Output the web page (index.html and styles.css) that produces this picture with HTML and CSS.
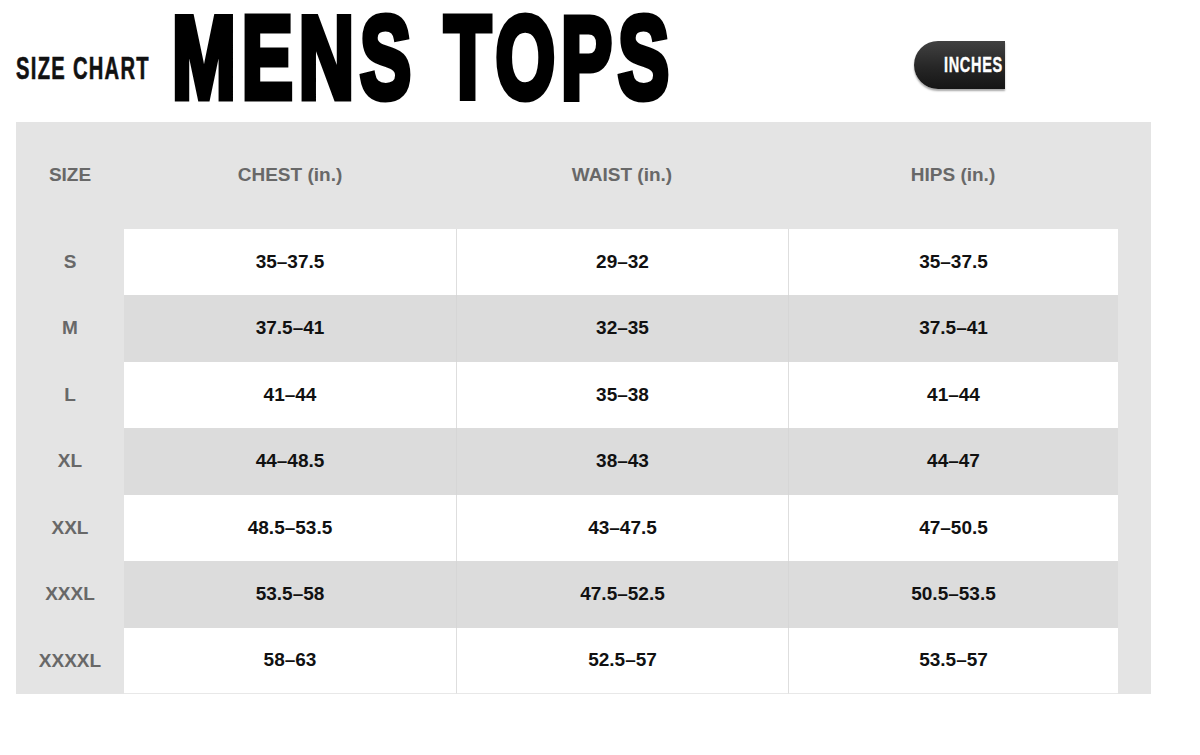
FILE: index.html
```html
<!DOCTYPE html>
<html lang="en">
<head>
<meta charset="utf-8">
<title>Size Chart - Mens Tops</title>
<link rel="stylesheet" href="styles.css">
</head>
<body>
<header class="top">
  <div class="size-chart"><span class="squeeze">SIZE CHART</span></div>
  <h1 class="mens-tops"><span class="squeeze">MENS TOPS</span></h1>
  <div class="unit-btn"><span class="squeeze">INCHES</span></div>
</header>
<section class="chart">
  <div class="row head">
    <div class="cell size">SIZE</div>
    <div class="cell">CHEST (in.)</div>
    <div class="cell">WAIST (in.)</div>
    <div class="cell">HIPS (in.)</div>
  </div>
  <div class="row light">
    <div class="cell size">S</div>
    <div class="cell data">35–37.5</div>
    <div class="cell data">29–32</div>
    <div class="cell data">35–37.5</div>
  </div>
  <div class="row dark">
    <div class="cell size">M</div>
    <div class="cell data">37.5–41</div>
    <div class="cell data">32–35</div>
    <div class="cell data">37.5–41</div>
  </div>
  <div class="row light">
    <div class="cell size">L</div>
    <div class="cell data">41–44</div>
    <div class="cell data">35–38</div>
    <div class="cell data">41–44</div>
  </div>
  <div class="row dark">
    <div class="cell size">XL</div>
    <div class="cell data">44–48.5</div>
    <div class="cell data">38–43</div>
    <div class="cell data">44–47</div>
  </div>
  <div class="row light">
    <div class="cell size">XXL</div>
    <div class="cell data">48.5–53.5</div>
    <div class="cell data">43–47.5</div>
    <div class="cell data">47–50.5</div>
  </div>
  <div class="row dark">
    <div class="cell size">XXXL</div>
    <div class="cell data">53.5–58</div>
    <div class="cell data">47.5–52.5</div>
    <div class="cell data">50.5–53.5</div>
  </div>
  <div class="row light">
    <div class="cell size">XXXXL</div>
    <div class="cell data">58–63</div>
    <div class="cell data">52.5–57</div>
    <div class="cell data">53.5–57</div>
  </div>
</section>
</body>
</html>
```

FILE: styles.css
```css
html, body {
  margin: 0;
  padding: 0;
  background: #ffffff;
}

body {
  font-family: "Liberation Sans", Arial, sans-serif;
  width: 1200px;
  height: 755px;
  overflow: hidden;
}

.top {
  display: flex;
  align-items: flex-start;
  height: 122px;
}

.squeeze {
  display: inline-block;
  white-space: nowrap;
  transform-origin: 0 50%;
}

.size-chart {
  margin: 53px -70px 0 16px;
  width: 210px;
  font-size: 31px;
  line-height: 31px;
  font-weight: 700;
  color: #111;
}
.size-chart .squeeze {
  letter-spacing: 2px;
  transform: scaleX(0.65);
  -webkit-text-stroke: 0.6px #111;
}

.mens-tops {
  margin: 8px -270px 0 16px;
  width: 770px;
  font-size: 116px;
  line-height: 100px;
  font-weight: 700;
  color: #000;
}
.mens-tops .squeeze {
  letter-spacing: 9px;
  transform: scaleX(0.66);
  -webkit-text-stroke: 7px #000;
}

.unit-btn {
  margin: 41px 0 0 242px;
  width: 91px;
  height: 48px;
  box-sizing: border-box;
  padding-left: 30px;
  display: flex;
  align-items: center;
  border-radius: 24px 0 0 24px;
  background: linear-gradient(#414141, #262626 55%, #151515);
  box-shadow: 0 2px 2px rgba(0, 0, 0, 0.35);
  font-size: 22px;
  line-height: 22px;
  font-weight: 700;
  color: #fff;
}
.unit-btn .squeeze {
  margin-right: -30px;
  letter-spacing: 1px;
  transform: scaleX(0.66);
  -webkit-text-stroke: 0.4px #fff;
}

.chart {
  margin-left: 16px;
  width: 1135px;
  box-sizing: border-box;
  padding-right: 33px;
  background: #e4e4e4;
}

.row {
  display: grid;
  grid-template-columns: 108px 332px 332px 330px;
  height: 66.5px;
}

.row.head {
  height: 106.5px;
}

.cell {
  display: flex;
  align-items: center;
  justify-content: center;
  font-size: 19px;
  font-weight: 700;
  color: #686868;
}

.cell.data {
  color: #111;
}

.light .cell.data {
  background: #ffffff;
}
.dark .cell.data {
  background: #dcdcdc;
}

.cell.data + .cell.data {
  border-left: 1px solid #dedede;
}
.dark .cell.data + .cell.data {
  border-left-color: #d6d6d6;
}

.row.light:last-child .cell.data {
  border-bottom: 1px solid #e8e8e8;
}
```
